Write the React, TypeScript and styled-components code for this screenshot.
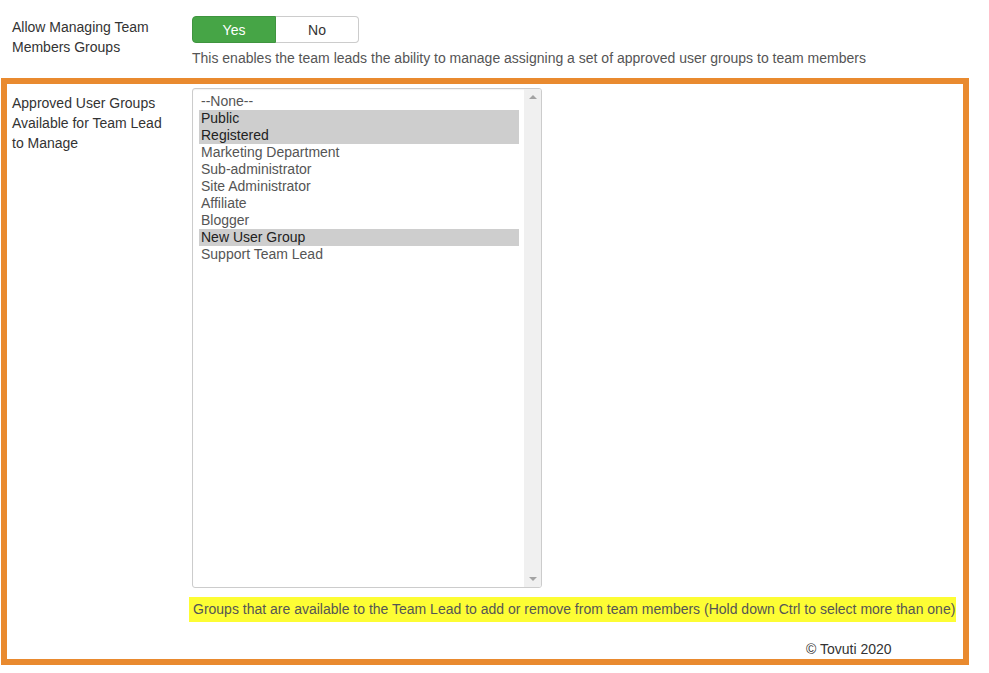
import { createGlobalStyle } from 'styled-components';
import styled from 'styled-components';

const GROUPS = [
  { name: '--None--', selected: false },
  { name: 'Public', selected: true },
  { name: 'Registered', selected: true },
  { name: 'Marketing Department', selected: false },
  { name: 'Sub-administrator', selected: false },
  { name: 'Site Administrator', selected: false },
  { name: 'Affiliate', selected: false },
  { name: 'Blogger', selected: false },
  { name: 'New User Group', selected: true },
  { name: 'Support Team Lead', selected: false },
];

export default function App() {
  return (
    <>
      <GlobalStyle />
      <Page>
        <FieldRow>
          <FieldLabel>
            Allow Managing Team
            <br />
            Members Groups
          </FieldLabel>
          <FieldControl>
            <Toggle>
              <ToggleButton $active>Yes</ToggleButton>
              <ToggleButton>No</ToggleButton>
            </Toggle>
            <Hint>
              This enables the team leads the ability to manage assigning a set of approved user
              groups to team members
            </Hint>
          </FieldControl>
        </FieldRow>

        <Panel>
          <PanelRow>
            <PanelLabel>
              Approved User Groups
              <br />
              Available for Team Lead
              <br />
              to Manage
            </PanelLabel>
            <PanelControl>
              <ListBox>
                <Options>
                  {GROUPS.map(g => (
                    <Option key={g.name} $selected={g.selected}>
                      {g.name}
                    </Option>
                  ))}
                </Options>
                <Scrollbar>
                  <Arrow $dir='up' />
                  <Arrow $dir='down' />
                </Scrollbar>
              </ListBox>
            </PanelControl>
          </PanelRow>
          <Highlight>
            Groups that are available to the Team Lead to add or remove from team members (Hold
            down Ctrl to select more than one)
          </Highlight>
          <Footer>© Tovuti 2020</Footer>
        </Panel>
      </Page>
    </>
  );
}

const GlobalStyle = createGlobalStyle`
  body {
    margin: 0;
    background: #fff;
    font-family: "Liberation Sans", Arial, sans-serif;
    font-size: 14px;
    color: #333;
  }
`;

const Page = styled.div`
  width: 989px;
  padding-top: 16px;
`;

const FieldRow = styled.div`
  display: flex;
  padding-left: 12px;
`;

const FieldLabel = styled.div`
  width: 180px;
  padding-top: 1px;
  line-height: 20px;
  color: #333;
`;

const FieldControl = styled.div`
  display: flex;
  flex-direction: column;
`;

const Toggle = styled.div`
  display: flex;
  width: 167px;
  height: 27px;
`;

const ToggleButton = styled.div<{ $active?: boolean }>`
  flex: 1;
  display: flex;
  align-items: center;
  justify-content: center;
  box-sizing: border-box;
  font-size: 14px;
  color: ${p => (p.$active ? '#fff' : '#333')};
  background: ${p => (p.$active ? '#46a546' : '#fff')};
  border: 1px solid ${p => (p.$active ? '#3f943f' : '#ccc')};
  border-radius: ${p => (p.$active ? '4px 0 0 4px' : '0 4px 4px 0')};
  ${p => !p.$active && 'border-left: none;'}
`;

const Hint = styled.div`
  margin-top: 5px;
  line-height: 20px;
  color: #555;
`;

const Panel = styled.div`
  margin: 10px 0 0 1px;
  width: 968px;
  height: 587px;
  box-sizing: border-box;
  border: 6px solid #e98a2f;
  padding: 4px 0 0 5px;
  display: flex;
  flex-direction: column;
`;

const PanelRow = styled.div`
  display: flex;
`;

const PanelLabel = styled.div`
  width: 180px;
  padding-top: 5px;
  line-height: 20px;
  color: #333;
`;

const PanelControl = styled.div`
  display: flex;
`;

const ListBox = styled.div`
  width: 350px;
  height: 500px;
  box-sizing: border-box;
  border: 1px solid #ccc;
  border-radius: 3px;
  display: flex;
  overflow: hidden;
  box-shadow: inset 0 1px 1px rgba(0, 0, 0, 0.05);
`;

const Options = styled.div`
  flex: 1;
  padding: 4px 5px 0 6px;
`;

const Option = styled.div<{ $selected?: boolean }>`
  height: 17px;
  line-height: 17px;
  padding-left: 2px;
  color: ${p => (p.$selected ? '#222' : '#555')};
  background: ${p => (p.$selected ? '#cecece' : 'transparent')};
`;

const Scrollbar = styled.div`
  width: 17px;
  background: #f0f0f0;
  display: flex;
  flex-direction: column;
  justify-content: space-between;
  align-items: center;
  padding: 6px 0;
`;

const Arrow = styled.div<{ $dir: 'up' | 'down' }>`
  width: 0;
  height: 0;
  border-left: 4px solid transparent;
  border-right: 4px solid transparent;
  ${p =>
    p.$dir === 'up'
      ? 'border-bottom: 4px solid #a3a3a3;'
      : 'border-top: 4px solid #a3a3a3;'}
`;

const Highlight = styled.div`
  align-self: flex-start;
  margin: 9px 0 0 177px;
  padding: 0 1px 0 4px;
  height: 25px;
  line-height: 25px;
  background: #fdfd34;
  color: #555;
  white-space: nowrap;
`;

const Footer = styled.div`
  margin: 19px 0 0 794px;
  line-height: 17px;
  color: #333;
`;
